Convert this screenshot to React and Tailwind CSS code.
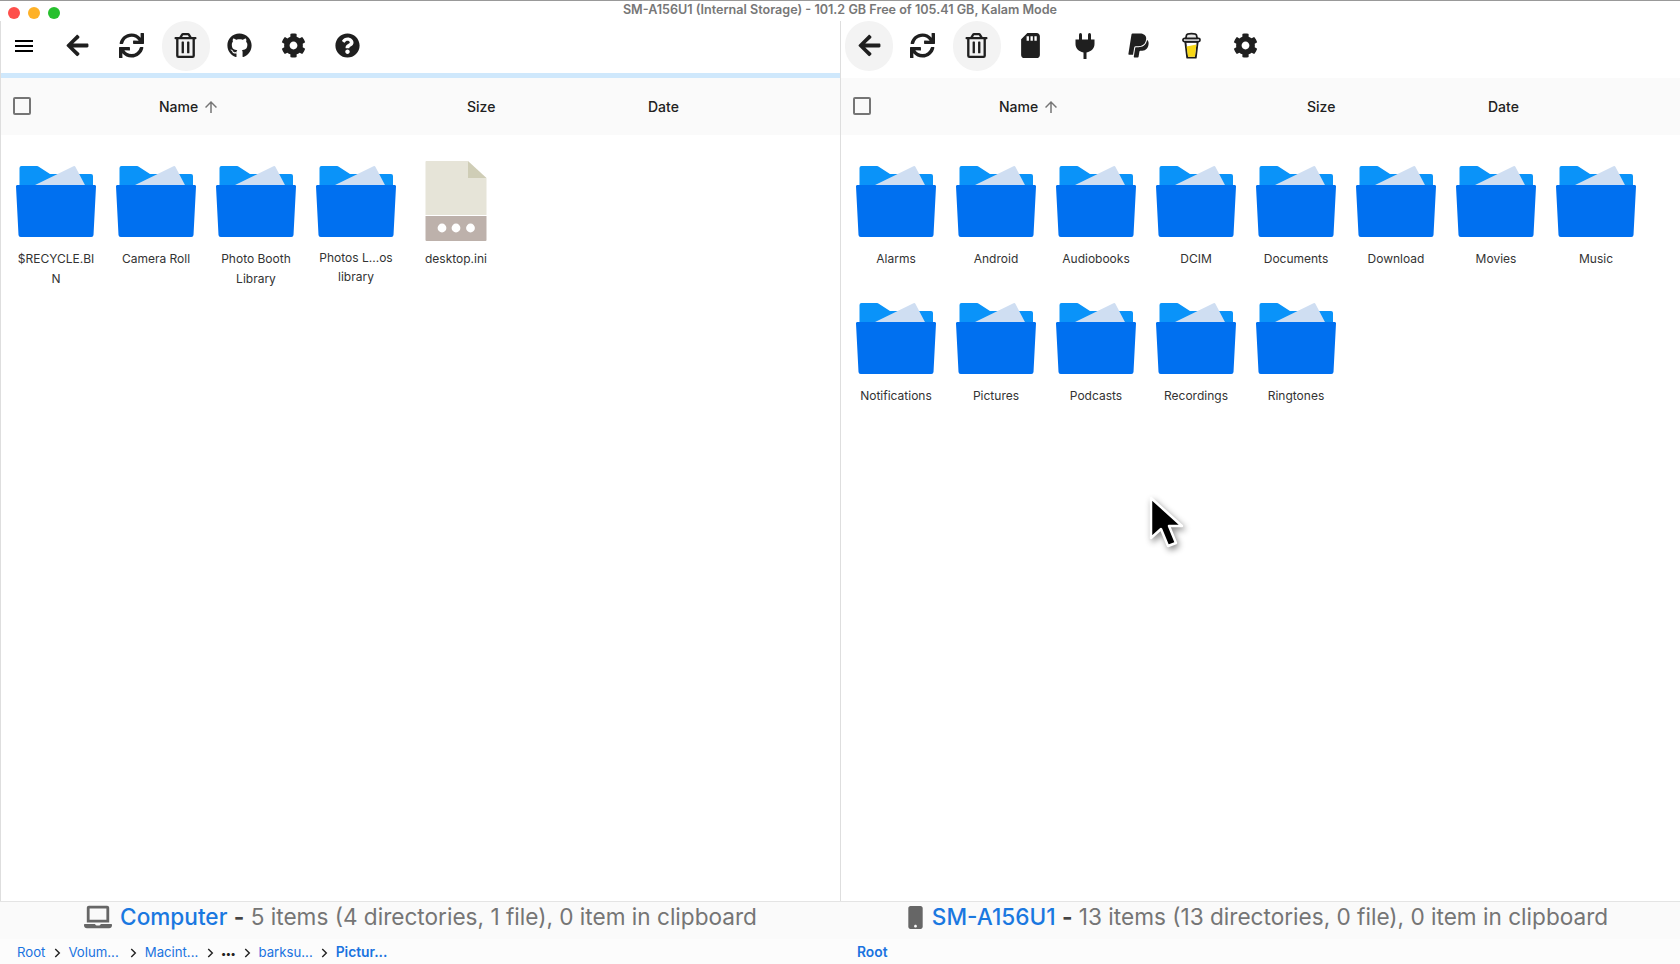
import React from "react";
import { FaArrowLeft, FaSync, FaRegTrashAlt, FaGithub, FaCog, FaQuestionCircle, FaSdCard, FaPaypal, FaLaptop, FaMobile } from "react-icons/fa";

function Folder() {
  return (
    <svg width="80" height="71" viewBox="0 0 80 71">
      <path d="M3.500 2a2 2 0 0 1 2-2H21a2 2 0 0 1 1.400.500L34 8h41a2 2 0 0 1 2 2v12H3.500z" fill="#0a93f9" />
      <path d="M17 20 57.500.300a1.500 1.500 0 0 1 2 .700L70 21z" fill="#cfdef2" />
      <path d="M1.500 19h77a1.500 1.500 0 0 1 1.500 1.600L77.500 69a2.200 2.200 0 0 1-2.200 2H4.700a2.200 2.200 0 0 1-2.200-2L0 20.600A1.500 1.500 0 0 1 1.500 19z" fill="#0070f0" />
    </svg>
  );
}

function FileIcon() {
  return (
    <svg width="62" height="80" viewBox="0 0 62 80" className="mb-[-4px]">
      <path d="M1 0h42v17h18.500v37H.500V1a1 1 0 0 1 .5-1z" fill="#e6e4d8" />
      <path d="M43 0 61.500 17H43z" fill="#cfcdb6" />
      <path d="M.500 55h61v24a1 1 0 0 1-1 1h-59a1 1 0 0 1-1-1z" fill="#bdb1ab" />
      <circle cx="17" cy="67" r="4.400" fill="#fff" />
      <circle cx="31" cy="67" r="4.400" fill="#fff" />
      <circle cx="45.500" cy="67" r="4.400" fill="#fff" />
    </svg>
  );
}

function Plug() {
  return (
    <svg width="20" height="26" viewBox="0 0 20 26" fill="#1f1f1f" className="ml-[2px]">
      <rect x="4" y="0" width="3" height="8" rx="1.500" />
      <rect x="13" y="0" width="3" height="8" rx="1.500" />
      <path d="M.500 6.500h19V11c0 4-3 7.500-8 8.500V26h-3v-6.500C3.500 18.500.500 15 .500 11z" />
    </svg>
  );
}

function Cup() {
  return (
    <svg width="19" height="28" viewBox="0 0 20 28">
      <path d="M3.500 9.500 5.500 26.200h9L16.500 9.500z" fill="#fff" stroke="#1c1c1c" strokeWidth="2" strokeLinejoin="round" />
      <path d="M4.800 14.500 6.400 25.200h7.200L15.200 12.500z" fill="#f7d716" />
      <rect x="1" y="6" width="18" height="3.500" rx="1.700" fill="#fff" stroke="#1c1c1c" strokeWidth="1.800" />
      <path d="M4 6 4.800 2.400C5 1.500 7 1 10 1s5 .5 5.200 1.400L16 6z" fill="#e8e8e8" stroke="#1c1c1c" strokeWidth="1.800" strokeLinejoin="round" />
    </svg>
  );
}

function Tool({ children, active }) {
  return (
    <div className={"flex h-[50px] w-[48px] items-center justify-center rounded-full text-[#1f1f1f] " + (active ? "bg-[#f3f3f3]" : "")}>
      {children}
    </div>
  );
}

function Head() {
  return (
    <div className="grid h-[57px] shrink-0 grid-cols-[146px_320px_181px_auto] items-center bg-[#fafafa] text-[14px] font-medium text-[#212121]">
      <div className="mb-[2px] ml-[12px] h-[18px] w-[18px] rounded-[2px] border-2 border-[#757575]" />
      <div className="flex items-center gap-[4px] pl-[12px]">
        <span>Name</span>
        <svg width="18" height="18" viewBox="0 0 24 24" fill="#757575"><path d="M4 12l1.410 1.410L11 7.830V20h2V7.830l5.580 5.590L20 12l-8-8-8 8z" /></svg>
      </div>
      <div>Size</div>
      <div>Date</div>
    </div>
  );
}

function Item({ name, tight, file }) {
  const lines = name.split("\n");
  return (
    <div className="flex w-[100px] flex-col items-center">
      <div className="flex h-[71px] items-end">{file ? <FileIcon /> : <Folder />}</div>
      <div className={"mt-[12px] text-center text-[12px] text-[#333] " + (tight ? "leading-[18.500px]" : "leading-[20px]")}>
        {lines.map((l) => <div key={l}>{l}</div>)}
      </div>
    </div>
  );
}

function Crumb({ children, bold }) {
  return <span className={"text-[#1a73e0] " + (bold ? "text-[13.800px] font-semibold" : "text-[13.200px]")}>{children}</span>;
}

function Sep() {
  return (
    <svg width="14" height="14" viewBox="0 0 24 24" fill="none" stroke="#222" strokeWidth="2.400" className="mx-[4.500px]"><path d="m9 5 7 7-7 7" /></svg>
  );
}

const leftItems = [
  { name: "$RECYCLE.BI\nN" },
  { name: "Camera Roll" },
  { name: "Photo Booth\nLibrary" },
  { name: "Photos L...os\nlibrary", tight: true },
  { name: "desktop.ini", file: true },
];
const rightItems = ["Alarms", "Android", "Audiobooks", "DCIM", "Documents", "Download", "Movies", "Music", "Notifications", "Pictures", "Podcasts", "Recordings", "Ringtones"];

export default function App() {
  return (
    <div className="relative flex h-[964px] w-[1680px] flex-col overflow-hidden border-t border-[#999] bg-white font-['Inter','Liberation_Sans',sans-serif]">
      <div className="grid h-[20px] shrink-0 grid-cols-[1fr_auto_1fr]">
        <div className="flex items-start gap-[8px] pl-[8px] pt-[6px]">
          <span className="h-[12px] w-[12px] rounded-full bg-[#fe4f4b]" />
          <span className="h-[12px] w-[12px] rounded-full bg-[#feb127]" />
          <span className="h-[12px] w-[12px] rounded-full bg-[#27c02e]" />
        </div>
        <div className="text-[12.600px] font-semibold leading-[18px] text-[#777]">SM-A156U1 (Internal Storage) - 101.2 GB Free of 105.41 GB, Kalam Mode</div>
      </div>
      <div className="flex min-h-0 flex-1">
        <div className="flex w-[841px] shrink-0 flex-col border-l border-r border-[#dedede]">
          <div className="flex h-[52px] shrink-0 items-center gap-[5.700px] pb-[3px]">
            <Tool>
              <svg width="24" height="24" viewBox="0 0 24 24" fill="#000" className="mr-[2px]"><path d="M3 18h18v-2H3v2zm0-5h18v-2H3v2zm0-7v2h18V6H3z" /></svg>
            </Tool>
            <Tool><span className="mr-[2px]"><FaArrowLeft size={25} /></span></Tool>
            <Tool><span className="mr-[1px]"><FaSync size={25} /></span></Tool>
            <Tool active><span className="mr-[1px]"><FaRegTrashAlt size={25} /></span></Tool>
            <Tool><FaGithub size={25} /></Tool>
            <Tool><FaCog size={25} /></Tool>
            <Tool><FaQuestionCircle size={25} /></Tool>
          </div>
          <div className="h-[5px] shrink-0 bg-[#cfe8fc]" />
          <Head />
          <div className="grid grid-cols-[repeat(8,100px)] content-start pl-[5px] pt-[31px]">
            {leftItems.map((it) => <Item key={it.name} {...it} />)}
          </div>
        </div>
        <div className="flex min-w-0 flex-1 flex-col">
          <div className="flex h-[52px] shrink-0 items-center gap-[5.800px] pb-[3px] pl-[4px]">
            <Tool active><FaArrowLeft size={25} /></Tool>
            <Tool><FaSync size={25} /></Tool>
            <Tool active><FaRegTrashAlt size={25} /></Tool>
            <Tool><FaSdCard size={25} /></Tool>
            <Tool><Plug /></Tool>
            <Tool><span className="ml-[2px]"><FaPaypal size={27} /></span></Tool>
            <Tool><Cup /></Tool>
            <Tool><FaCog size={25} /></Tool>
          </div>
          <div className="h-[5px] shrink-0" />
          <Head />
          <div className="grid grid-cols-[repeat(8,100px)] content-start gap-y-[34px] pl-[5px] pt-[31px]">
            {rightItems.map((n) => <Item key={n} name={n} />)}
          </div>
        </div>
      </div>
      <div className="grid h-[38px] shrink-0 grid-cols-[841px_1fr] items-center border-t border-[#e4e4e4] bg-[#fafafa] pb-[7px] text-[22.600px] leading-[26px] text-[#757575]">
        <div className="flex items-center justify-center gap-[8px]">
          <FaLaptop size={28} color="#666" />
          <div><span className="font-medium text-[#1a78e0]">Computer</span> <span className="font-bold text-[#444]">-</span> 5 items (4 directories, 1 file), 0 item in clipboard</div>
        </div>
        <div className="flex items-center justify-center gap-[5px] pr-[9px]">
          <FaMobile size={23} color="#666" />
          <div><span className="font-medium text-[#1a78e0]">SM-A156U1</span> <span className="font-bold text-[#444]">-</span> 13 items (13 directories, 0 file), 0 item in clipboard</div>
        </div>
      </div>
      <div className="grid h-[25px] shrink-0 grid-cols-[841px_1fr] items-center bg-[#fcfcfc] pt-[2px]">
        <div className="flex items-center pl-[17px]">
          <Crumb>Root</Crumb><Sep /><Crumb>Volum...</Crumb><span className="w-[3px]" /><Sep /><Crumb>Macint...</Crumb><Sep />
          <span className="text-[10px] font-bold leading-none text-[#222]">•••</span><Sep /><Crumb>barksu...</Crumb><Sep /><Crumb bold>Pictur...</Crumb>
        </div>
        <div className="flex items-center pl-[16px]"><Crumb bold>Root</Crumb></div>
      </div>
      <svg className="absolute left-[1144px] top-[491px] drop-shadow-[2px_3px_3px_rgba(0,0,0,0.45)]" width="42" height="62" viewBox="0 0 42 62">
        <path d="M7 6v40l10-9 7 17 8-3-7-17h13z" fill="#000" stroke="#fff" strokeWidth="2.500" strokeLinejoin="round" />
      </svg>
    </div>
  );
}
